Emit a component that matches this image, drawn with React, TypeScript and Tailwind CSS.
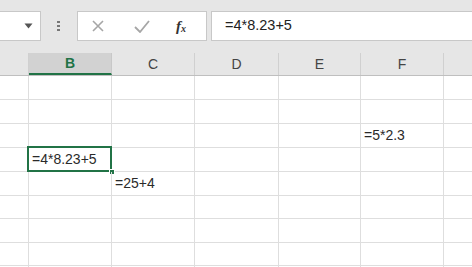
import React from "react";

const cols = [
  { key: "A", w: 29 },
  { key: "B", w: 83 },
  { key: "C", w: 83 },
  { key: "D", w: 84 },
  { key: "E", w: 82 },
  { key: "F", w: 83 },
  { key: "G", w: 60 },
];

const rowHeights = [24, 24, 24, 24, 24, 23, 24, 23, 24];

const cells: Record<string, string> = {
  "2-F": "=5*2.3",
  "3-B": "=4*8.23+5",
  "4-C": "=25+4",
};

export default function App() {
  return (
    <div
      className="w-[472px] h-[267px] overflow-hidden bg-white text-[#222]"
      style={{ fontFamily: '"Liberation Sans", Arial, sans-serif' }}
    >
      {/* toolbar */}
      <div className="h-[53px] bg-[#e6e6e6] flex items-start pt-[11px]">
        <div className="w-[41px] h-[30px] bg-white border border-l-0 border-[#c8c8c8] flex items-center justify-end pr-[7px]">
          <svg width="9" height="6" viewBox="0 0 9 6">
            <path d="M0.5 0.5 L8.5 0.5 L4.5 5.5 Z" fill="#555" />
          </svg>
        </div>
        <div className="ml-[16px] h-[30px] flex flex-col items-center justify-center gap-[2px]">
          <div className="w-[3px] h-[2px] bg-[#777]" />
          <div className="w-[3px] h-[2px] bg-[#777]" />
          <div className="w-[3px] h-[2px] bg-[#777]" />
        </div>
        <div className="ml-[17px] w-[130px] h-[30px] bg-white border border-[#c8c8c8] flex items-center">
          <svg className="ml-[14px]" width="12" height="12" viewBox="0 0 12 12">
            <path d="M1 1 L11 11 M11 1 L1 11" stroke="#a6a6a6" strokeWidth="1.6" />
          </svg>
          <svg className="ml-[30px]" width="16" height="13" viewBox="0 0 16 13">
            <path d="M1 7 L6 12 L15 1" stroke="#a6a6a6" strokeWidth="1.8" fill="none" />
          </svg>
          <span
            className="ml-[26px] text-[15px] italic font-bold text-[#333] leading-none"
            style={{ fontFamily: '"Liberation Serif", "Times New Roman", serif' }}
          >
            f<span className="text-[10px] align-[-1px]">x</span>
          </span>
        </div>
        <div className="ml-[4px] flex-1 h-[30px] bg-white border border-r-0 border-[#c8c8c8] flex items-center pl-[13px] text-[14.5px] text-[#222]">
          =4*8.23+5
        </div>
      </div>

      {/* header row */}
      <div className="h-[23px] flex bg-[#e6e6e6] border-b border-[#bfbfbf]">
        {cols.map((c) => {
          const sel = c.key === "B";
          return (
            <div
              key={c.key}
              style={{ width: c.w }}
              className={
                "shrink-0 h-full flex items-center justify-center text-[14px] border-r " +
                (sel
                  ? "bg-[#d2d2d2] text-[#217346] font-bold border-[#c8c8c8] border-b-2 border-b-[#217346]"
                  : "text-[#444] border-[#d0d0d0]")
              }
            >
              {c.key === "A" || c.key === "G" ? "" : c.key}
            </div>
          );
        })}
      </div>

      {/* grid rows */}
      {rowHeights.map((h, r) => (
        <div key={r} className="flex border-b border-[#dedede]" style={{ height: h }}>
          {cols.map((c) => {
            const v = cells[`${r}-${c.key}`];
            const sel = r === 3 && c.key === "B";
            return (
              <div
                key={c.key}
                style={{ width: c.w }}
                className="shrink-0 h-full border-r border-[#dedede] relative flex items-center pl-[3px] text-[14px] text-[#2a2a2a] whitespace-nowrap"
              >
                {v}
                {sel && (
                  <>
                    <div className="absolute top-[-2px] left-[-2px] right-[-1px] bottom-[-1px] border-2 border-[#217346]" />
                    <div className="absolute right-[-4px] bottom-[-4px] w-[6px] h-[6px] bg-[#217346] border border-white" />
                  </>
                )}
              </div>
            );
          })}
        </div>
      ))}
    </div>
  );
}
